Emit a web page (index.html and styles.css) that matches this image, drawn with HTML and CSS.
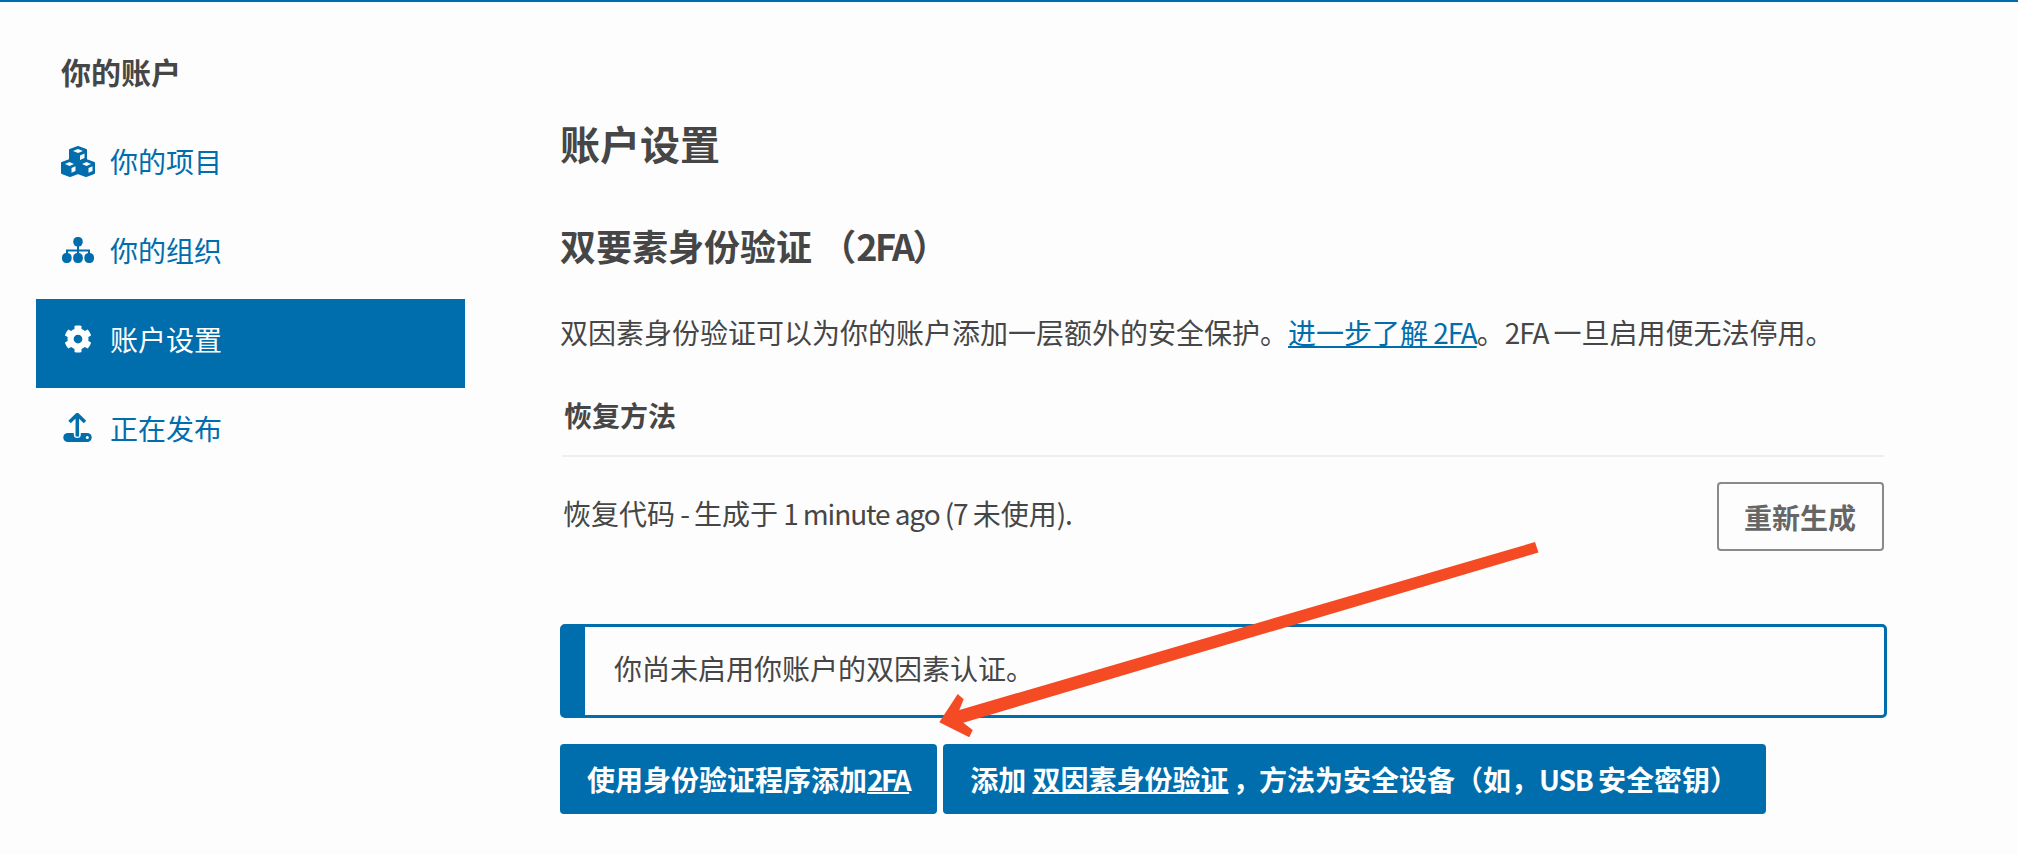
FILE: index.html
```html
<!DOCTYPE html>
<html lang="zh">
<head>
  <meta charset="UTF-8">
  <meta name="viewport" content="width=device-width, initial-scale=1.0">
  <title>账户设置</title>
  <link rel="stylesheet" href="styles.css">
</head>
<body>

<div class="page">
  <nav class="sidebar">
    <h3 class="sidebar-title">你的账户</h3>
    <a class="nav-link" href="#">
      <span class="nav-icon">
        <svg width="34" height="31" viewBox="0 0 34 31">
          <path class="icon-solid" d="M17 1l8 3v10l8 3v10l-8 3-8-3-8 3-8-3V17l8-3V4z"/>
          <path class="icon-hole" d="M17 3l5 2-5 2-5-2zM8.500 16l4.500 2-4.500 2L4 18zM25.500 16l4.500 2-4.500 2-4.500-2zM19 9.500l4.500-2V12L19 14zM10.500 22l4-1.800v4.800l-4 1.800zM27.500 22l4-1.800v4.800l-4 1.800z"/>
        </svg>
      </span>
      你的项目
    </a>
    <a class="nav-link" href="#">
      <span class="nav-icon">
        <svg width="32" height="26" viewBox="0 0 32 26">
          <rect class="icon-fill" x="11.300" y="0" width="9.400" height="9.400" rx="4.200"/>
          <path class="icon-line" d="M16 8v10M5 18v-4.500h22V18"/>
          <rect class="icon-fill" x="0" y="16" width="9.600" height="10" rx="4.200"/>
          <rect class="icon-fill" x="11.200" y="16" width="9.600" height="10" rx="4.200"/>
          <rect class="icon-fill" x="22.400" y="16" width="9.600" height="10" rx="4.200"/>
        </svg>
      </span>
      你的组织
    </a>
    <a class="nav-link nav-link-active" href="#">
      <span class="nav-icon">
        <svg width="28" height="28" viewBox="0 0 512 512">
          <path fill="currentColor" d="M487.400 315.700l-42.600-24.600c4.300-23.200 4.300-47 0-70.200l42.600-24.600c4.900-2.800 7.100-8.600 5.500-14-11.100-35.600-30-67.800-54.700-94.600-3.800-4.100-10-5.100-14.800-2.300L380.800 110c-17.900-15.400-38.500-27.300-60.800-35.100V25.800c0-5.600-3.900-10.500-9.400-11.700-36.700-8.200-74.300-7.800-109.200 0-5.500 1.200-9.400 6.100-9.400 11.700V75c-22.200 7.900-42.800 19.800-60.800 35.100L88.700 85.500c-4.900-2.800-11-1.900-14.800 2.300-24.700 26.700-43.600 58.900-54.700 94.600-1.700 5.400.6 11.200 5.500 14L67.300 221c-4.300 23.200-4.300 47 0 70.200l-42.600 24.600c-4.900 2.800-7.100 8.600-5.500 14 11.100 35.600 30 67.800 54.700 94.600 3.800 4.100 10 5.100 14.800 2.300l42.600-24.600c17.900 15.400 38.500 27.300 60.800 35.100v49.200c0 5.600 3.900 10.500 9.400 11.700 36.700 8.200 74.300 7.800 109.200 0 5.500-1.200 9.400-6.100 9.400-11.700v-49.200c22.200-7.900 42.800-19.800 60.800-35.100l42.600 24.600c4.900 2.800 11 1.900 14.800-2.300 24.700-26.700 43.600-58.900 54.700-94.600 1.500-5.500-.7-11.300-5.600-14.100zM256 336c-44.100 0-80-35.900-80-80s35.900-80 80-80 80 35.900 80 80-35.900 80-80 80z"/>
        </svg>
      </span>
      账户设置
    </a>
    <a class="nav-link" href="#">
      <span class="nav-icon">
        <svg width="30" height="30" viewBox="0 0 30 30">
          <rect class="icon-fill" x="0.300" y="20" width="28.400" height="9" rx="4.500"/>
          <path class="icon-halo" d="M14.300 12v9.500"/>
          <path class="icon-arrow" d="M14.300 23.500V2M6.500 9l7.800-7.500L22 9"/>
          <circle class="icon-hole" cx="24.300" cy="24.400" r="1.500"/>
        </svg>
      </span>
      正在发布
    </a>
  </nav>

  <main class="content">
    <h1 class="page-title">账户设置</h1>
    <h2 class="section-title">双要素身份验证 （<span class="latin">2FA</span>）</h2>
    <p class="intro">双因素身份验证可以为你的账户添加一层额外的安全保护。<a href="#">进一步了解<span class="latin"> 2FA</span></a>。<span class="latin">2FA </span>一旦启用便无法停用。</p>

    <div class="recovery">
      <h3 class="recovery-title">恢复方法</h3>
      <div class="recovery-row">
        <span class="recovery-text">恢复代码<span class="latin"> - </span>生成于<span class="latin"> 1 minute ago (7 </span>未使用<span class="latin">).</span></span>
        <a class="button button-outline" href="#">重新生成</a>
      </div>
    </div>

    <div class="callout">你尚未启用你账户的双因素认证。</div>

    <div class="actions">
      <a class="button button-primary" href="#">使用身份验证程序添加<u class="latin">2FA</u></a>
      <a class="button button-primary" href="#">添加 <u>双因素身份验证</u><span class="tight"> ，</span>方法为安全设备（如，<span class="latin">USB </span>安全密钥）</a>
    </div>
  </main>
</div>

<svg class="arrow" width="2018" height="854" viewBox="0 0 2018 854">
  <path d="M1535 542L1538.500 552.500L963.300 722.700L972.700 730L969.300 737.300L939.300 722.300L957.700 694L963.700 699.300L959.300 710z"/>
</svg>

</body>
</html>
```

FILE: styles.css
```css
html,
body {
  height: 100%;
}
body {
  margin: 0;
  background-color: #fdfdfd;
  color: #464646;
  font-family: "Noto Sans CJK SC", "Noto Sans", sans-serif;
  font-size: 28px;
  border-top: 2px solid #006dad;
  box-sizing: border-box;
  overflow: hidden;
}
a {
  color: #006dad;
  text-decoration: none;
}
.latin {
  letter-spacing: -1.1px;
}
.tight {
  letter-spacing: -2px;
}
.page {
  display: flex;
  padding-left: 36px;
}
.sidebar {
  width: 429px;
  flex: none;
}
.sidebar-title {
  margin: 49px 0 30px 25px;
  font-size: 30px;
  font-weight: 700;
  line-height: 40px;
}
.nav-link {
  display: flex;
  align-items: center;
  height: 89px;
  box-sizing: border-box;
  padding: 0 0 9px 25px;
  font-size: 28px;
}
.nav-link-active {
  background-color: #006dad;
  color: #fff;
}
.nav-icon {
  display: flex;
  justify-content: center;
  width: 34px;
  margin-right: 15px;
}
.icon-fill {
  fill: #006dad;
}
.icon-solid {
  fill: #006dad;
  stroke: #006dad;
  stroke-width: 2;
  stroke-linejoin: round;
}
.icon-hole {
  fill: #fdfdfd;
}
.icon-line {
  fill: none;
  stroke: #006dad;
  stroke-width: 2;
}
.icon-halo {
  fill: none;
  stroke: #fdfdfd;
  stroke-width: 7;
  stroke-linecap: round;
}
.icon-arrow {
  fill: none;
  stroke: #006dad;
  stroke-width: 3.500;
}
.content {
  width: 1327px;
  margin-left: 95px;
  flex: none;
}
.page-title {
  margin: 117px 0 0;
  font-size: 40px;
  font-weight: 700;
  line-height: 48px;
}
.section-title {
  margin: 56px 0 0;
  font-size: 36px;
  font-weight: 700;
  line-height: 44px;
}
.section-title .latin {
  letter-spacing: -2.5px;
}
.intro {
  margin: 45px 0 0;
  line-height: 40px;
}
.intro a {
  text-decoration: underline;
}
.recovery {
  margin: 43px 3px 0 2px;
}
.recovery-title {
  margin: 0;
  padding: 0 0 20px 2px;
  border-bottom: 2px solid #efefef;
  font-size: 28px;
  font-weight: 700;
  line-height: 40px;
}
.recovery-row {
  display: flex;
  justify-content: space-between;
  align-items: flex-start;
  margin-top: 25px;
  padding-left: 1px;
  line-height: 40px;
}
.recovery-text {
  margin-top: 11px;
}
.button {
  display: flex;
  align-items: center;
  height: 70px;
  box-sizing: border-box;
  border-radius: 4px;
  font-weight: 700;
  white-space: pre;
}
.button u {
  text-decoration-thickness: 2px;
}
.button u.latin {
  letter-spacing: -2.5px;
}
.button-outline {
  height: 69px;
  padding: 0 26px 0 25px;
  border: 2px solid #8a8a8a;
  color: #666;
}
.button-primary {
  padding: 0 28px 0 27px;
  background-color: #006dad;
  color: #fff;
}
.callout {
  margin-top: 73px;
  height: 94px;
  box-sizing: border-box;
  padding: 0 0 6px 29px;
  display: flex;
  align-items: center;
  border: 3px solid #006dad;
  border-left-width: 25px;
  border-radius: 5px;
}
.actions {
  display: flex;
  gap: 6px;
  margin-top: 26px;
}
.arrow {
  position: absolute;
  top: 0;
  left: 0;
  fill: #f44b25;
  pointer-events: none;
}
```
